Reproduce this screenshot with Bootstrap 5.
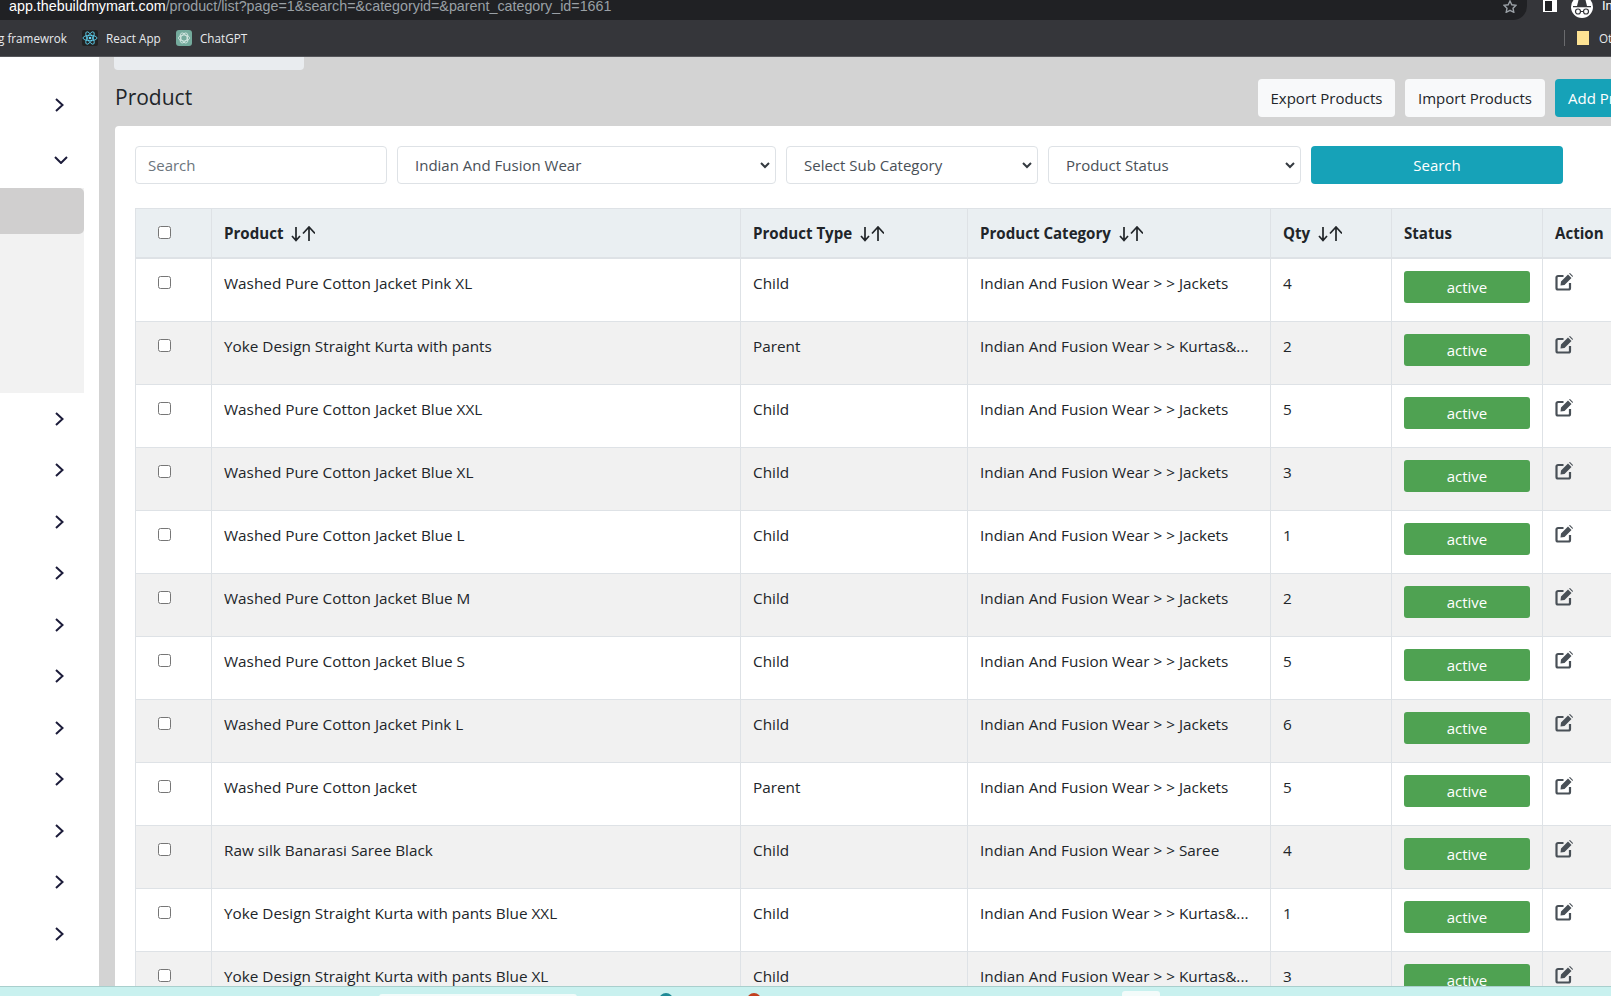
<!DOCTYPE html>
<html lang="en">
<head>
<meta charset="utf-8">
<title>Product</title>
<link href="https://cdn.jsdelivr.net/npm/bootstrap@5.3.0/dist/css/bootstrap.min.css" rel="stylesheet">
<style>
html,body{height:100%;overflow:hidden}
body{font-family:"Open Sans","Noto Sans",sans-serif;font-size:15px;color:#212529;background:#d3d3d3}
.shell{height:996px;width:1611px;overflow:hidden}
.omni-row{height:20px;background:#35363a;color:#fff;flex:none}
.omni{width:1527px;flex:none;height:20px;background:#202124;border-bottom-right-radius:14px;padding-left:9px;font:14.3px/13px "Liberation Sans",sans-serif;color:#9aa0a6;overflow:hidden}
.omni b{font-weight:400;color:#fff}
.omni-tools{height:20px}
.star-i{margin-right:10px;margin-top:0;flex:none}
.prof{width:22px;height:22px;border-radius:50%;background:#fff;margin:-4px 0 0 14px;flex:none}
.sq{width:14px;height:12px;background:#fff;padding:1px 0 0 2px;margin-left:16px;flex:none}
.sq i{display:block;width:7px;height:10px;background:#202124}
.prof-t{font:13px/12px "Liberation Sans",sans-serif;margin-left:9px;color:#fff;white-space:nowrap}
.bmarks{height:37px;flex:none;background:#35363a;border-bottom:1px solid #55565a;color:#e8eaed;font:11.7px/16px "Open Sans",sans-serif;white-space:nowrap;overflow:hidden}
.bm-1{margin-left:-2px;width:84px;flex:none}
.bm-i{width:16px;height:16px;margin-right:8px;flex:none}
.bm-2{width:70px;flex:none}
.bm-3{width:46px;flex:none}
.bm-div{width:1px;height:16px;background:#6a6b6e;margin-left:1318px;flex:none}
.bm-fold{width:12px;height:14px;background:#fde293;margin-left:12px;margin-right:10px;flex:none}
.app{height:929px;flex:none;overflow:hidden}
.sidenav{width:99px;flex:none;background:#fff;padding-top:22px;height:929px;overflow:hidden}
.nav-rw{height:51.5px;padding-left:55px}
.nav-rw.first{height:52px}
.nav-rw.open{height:52px;margin-top:3px;padding-left:54px}
.subm{height:205px;margin:2px 15px 0 0;background:#f2f2f2}
.subm-on{height:46px;background:#d0cfcf;border-radius:0 5px 5px 0}
.chev{stroke:#1c1c3a;stroke-width:2;fill:none}
.pagewrap{flex:1;min-width:0;padding-left:16px;overflow:hidden}
.crumbbox{height:13px;width:190px;margin-left:-1px;background:#e9ecef;border-radius:0 0 4px 4px}
.toprow{height:38px;margin-top:9px;margin-bottom:9px;width:1580px}
.tb-gap{gap:10px}
.ptitle{font-size:21px;font-weight:400;margin:0;line-height:38px;position:relative;top:-1px;color:#212529}
.tbtn{height:38px;padding:0 12px;font-size:15px;line-height:38px;border:0;border-radius:4px;white-space:nowrap}
.tbtn-l{background:#f8f9fa;color:#212529}
.tbtn-l.e{width:137px}
.tbtn-l.i{width:140px}
.tbtn-t{background:#16a2b8;color:#fff;width:140px;text-align:left;padding-left:13px}
.mainbox{width:1520px;background:#fff;border:0;border-radius:4px 0 0 0;padding:20px 20px 0;height:900px}
.filters{height:38px;margin-bottom:24px;gap:10px}
.f-search{width:252px;flex:none;font-size:15px;padding:0 12px;height:38px;border-radius:4px}
.f-search::placeholder{color:#6c757d}
.f-sel{height:38px;font-size:15px;color:#495057;padding:0 24px 0 17px;flex:none;border-radius:4px;background-position:right 5px center;background-size:10px 7px;background-image:url("data:image/svg+xml,%3csvg xmlns='http://www.w3.org/2000/svg' viewBox='0 0 10 7'%3e%3cpath fill='none' stroke='%23343a40' stroke-width='2' d='M1 1l4 4 4-4'/%3e%3c/svg%3e")}
.f-a{width:379px}.f-b{width:252px}.f-c{width:253px}
.f-btn{width:252px;height:38px;flex:none;background:#16a2b8;color:#fff;border:0;font-size:15px;border-radius:4px;padding:0}
.ptable{table-layout:fixed;width:1480px;margin:0;border-color:#dee2e6;color:#212529;font-size:15.3px}
.ptable th,.ptable td{padding:12px;height:63px;vertical-align:top;line-height:24px;white-space:nowrap;overflow:hidden}
.ptable thead th{height:49px;background:#eaeff2;font-weight:700;font-size:15.1px;padding:12px;border-bottom:2px solid #dee2e6;line-height:24px}
.ptable tbody tr:nth-child(even)>td{background:#f1f1f1}
.ptable input{width:13px;height:13px;margin:5px 0 0 10px;display:block;accent-color:#fff}
.c-chk{width:76px}.c-prod{width:529px}.c-type{width:227px}.c-cat{width:303px}.c-qty{width:121px}.c-st{width:151px}.c-act{width:73px}
.sort-i{width:24px;height:16px;margin-left:8px;vertical-align:-3px;stroke:#212529;stroke-width:1.7;fill:none}
.st-btn{display:block;width:126px;height:32px;margin-top:0;background:#4fa252;color:#fff;border:0;border-radius:3px;font-size:15px;line-height:32px;padding:0;text-align:center}
.ed-i{width:18px;height:18px;display:block;margin:2px 0 0 0}
.taskbar{height:10px;flex:none;background:#c9f1ef;border-top:1px solid #a9cfcd;position:relative;overflow:hidden}
.tb-w{position:absolute;background:#f3fbfa;border-radius:3px 3px 0 0}
.tb-w.a{left:379px;width:198px;top:7px;height:6px}
.tb-w.b{left:1122px;width:38px;top:4px;height:8px}
.tb-d{position:absolute;width:14px;height:14px;border-radius:50%;top:6px}
.tb-d.a{left:659px;background:#1f8a96}
.tb-d.b{left:747px;background:#c2401f}
</style>
</head>
<body>
<svg width="0" height="0" class="d-block position-absolute">
<symbol id="i-r" viewBox="0 0 9 14"><path d="M1 1l6.5 6L1 13"/></symbol>
<symbol id="i-d" viewBox="0 0 14 8"><path d="M1 1l6 6 6-6"/></symbol>
<symbol id="i-s" viewBox="0 0 24 16"><path d="M5 1v13M1 10l4 4.5 4-4.5M18 15V1.5M12 7.5L18 1l6 6.500"/></symbol>
<symbol id="i-e" viewBox="0 0 18 18"><path d="M8.500 3H3A1.500 1.500 0 0 0 1.500 4.500v10.500A1.500 1.500 0 0 0 3 16.500h10.500a1.500 1.500 0 0 0 1.500-1.500V10" fill="none" stroke="#495057" stroke-width="2.200"/><path d="M6 8.500l7-7 3.500 3.500-7 7-4 .500zM14 .5l1-.5 3 3-.5 1z" fill="#495057"/></symbol>
</svg>
<div class="shell d-flex flex-column">
  <div class="omni-row d-flex">
    <div class="omni d-flex justify-content-between"><span class="text-nowrap"><b>app.thebuildmymart.com</b>/product/list?page=1&amp;search=&amp;categoryid=&amp;parent_category_id=1661</span>
      <svg width="14" height="13" viewBox="0 0 14 13" class="star-i" fill="none" stroke="#9aa0a6" stroke-width="1.400"><path d="M7 1l1.800 3.800 4.200.500-3 2.900.800 4.100L7 10.300 3.200 12.300 4 8.200 1 5.300l4.200-.500z"/></svg></div>
    <div class="omni-tools d-flex align-items-start">
      <div class="sq"><i></i></div>
      <div class="prof d-flex align-items-center justify-content-center"><svg width="18" height="15" viewBox="0 0 18 15" fill="#35363a"><path d="M5.500 0h7l1.500 6h4v1.200H0V6h4z"/><circle cx="5" cy="11.500" r="2.500" fill="none" stroke="#35363a" stroke-width="1.200"/><circle cx="13" cy="11.500" r="2.500" fill="none" stroke="#35363a" stroke-width="1.200"/><path d="M7.500 11h3v1h-3z"/></svg></div>
      <div class="prof-t">In</div>
    </div>
  </div>
  <div class="bmarks d-flex align-items-center">
    <div class="bm-1">g framewrok</div>
    <svg class="bm-i" viewBox="0 0 16 16"><rect width="16" height="16" rx="2" fill="#222"/><g fill="none" stroke="#61dafb" stroke-width=".8"><ellipse cx="8" cy="8" rx="7" ry="2.700"/><ellipse cx="8" cy="8" rx="7" ry="2.700" transform="rotate(60 8 8)"/><ellipse cx="8" cy="8" rx="7" ry="2.700" transform="rotate(120 8 8)"/></g><circle cx="8" cy="8" r="1.300" fill="#61dafb"/></svg>
    <div class="bm-2">React App</div>
    <svg class="bm-i" viewBox="0 0 16 16"><rect width="16" height="16" rx="3" fill="#74aa9c"/><g fill="none" stroke="#e8f3f0" stroke-width=".7"><ellipse cx="8" cy="8" rx="5.500" ry="3"/><ellipse cx="8" cy="8" rx="5.500" ry="3" transform="rotate(60 8 8)"/><ellipse cx="8" cy="8" rx="5.500" ry="3" transform="rotate(120 8 8)"/></g></svg>
    <div class="bm-3">ChatGPT</div>
    <div class="bm-div"></div>
    <div class="bm-fold"></div>
    <div>Ot</div>
  </div>
  <div class="app d-flex">
    <aside class="sidenav">
      <div class="nav-rw first d-flex align-items-center"><svg class="chev" width="9" height="14"><use href="#i-r"/></svg></div>
      <div class="nav-rw open d-flex align-items-center"><svg class="chev" width="14" height="8"><use href="#i-d"/></svg></div>
      <div class="subm"><div class="subm-on"></div></div>
      <div class="nav-rw d-flex align-items-center"><svg class="chev" width="9" height="14"><use href="#i-r"/></svg></div>
      <div class="nav-rw d-flex align-items-center"><svg class="chev" width="9" height="14"><use href="#i-r"/></svg></div>
      <div class="nav-rw d-flex align-items-center"><svg class="chev" width="9" height="14"><use href="#i-r"/></svg></div>
      <div class="nav-rw d-flex align-items-center"><svg class="chev" width="9" height="14"><use href="#i-r"/></svg></div>
      <div class="nav-rw d-flex align-items-center"><svg class="chev" width="9" height="14"><use href="#i-r"/></svg></div>
      <div class="nav-rw d-flex align-items-center"><svg class="chev" width="9" height="14"><use href="#i-r"/></svg></div>
      <div class="nav-rw d-flex align-items-center"><svg class="chev" width="9" height="14"><use href="#i-r"/></svg></div>
      <div class="nav-rw d-flex align-items-center"><svg class="chev" width="9" height="14"><use href="#i-r"/></svg></div>
      <div class="nav-rw d-flex align-items-center"><svg class="chev" width="9" height="14"><use href="#i-r"/></svg></div>
      <div class="nav-rw d-flex align-items-center"><svg class="chev" width="9" height="14"><use href="#i-r"/></svg></div>
      <div class="nav-rw d-flex align-items-center"><svg class="chev" width="9" height="14"><use href="#i-r"/></svg></div>
    </aside>
    <main class="pagewrap">
      <div class="crumbbox"></div>
      <div class="toprow d-flex justify-content-between">
        <h1 class="ptitle">Product</h1>
        <div class="d-flex tb-gap">
          <button type="button" class="tbtn tbtn-l e">Export Products</button>
          <button type="button" class="tbtn tbtn-l i">Import Products</button>
          <button type="button" class="tbtn tbtn-t">Add Products</button>
        </div>
      </div>
      <div class="mainbox">
        <div class="filters d-flex">
          <input type="text" class="form-control f-search" placeholder="Search">
          <select class="form-select f-sel f-a"><option>Indian And Fusion Wear</option></select>
          <select class="form-select f-sel f-b"><option>Select Sub Category</option></select>
          <select class="form-select f-sel f-c"><option>Product Status</option></select>
          <button type="button" class="f-btn">Search</button>
        </div>
        <table class="table table-bordered ptable">
          <colgroup><col class="c-chk"><col class="c-prod"><col class="c-type"><col class="c-cat"><col class="c-qty"><col class="c-st"><col class="c-act"></colgroup>
          <thead><tr>
            <th><input type="checkbox"></th>
            <th>Product<svg class="sort-i"><use href="#i-s"/></svg></th>
            <th>Product Type<svg class="sort-i"><use href="#i-s"/></svg></th>
            <th>Product Category<svg class="sort-i"><use href="#i-s"/></svg></th>
            <th>Qty<svg class="sort-i"><use href="#i-s"/></svg></th>
            <th>Status</th>
            <th>Action</th>
          </tr></thead>
          <tbody>
            <tr><td><input type="checkbox"></td><td>Washed Pure Cotton Jacket Pink XL</td><td>Child</td><td>Indian And Fusion Wear &gt; &gt; Jackets</td><td>4</td><td><button type="button" class="st-btn">active</button></td><td><svg class="ed-i"><use href="#i-e"/></svg></td></tr>
            <tr><td><input type="checkbox"></td><td>Yoke Design Straight Kurta with pants</td><td>Parent</td><td>Indian And Fusion Wear &gt; &gt; Kurtas&amp;...</td><td>2</td><td><button type="button" class="st-btn">active</button></td><td><svg class="ed-i"><use href="#i-e"/></svg></td></tr>
            <tr><td><input type="checkbox"></td><td>Washed Pure Cotton Jacket Blue XXL</td><td>Child</td><td>Indian And Fusion Wear &gt; &gt; Jackets</td><td>5</td><td><button type="button" class="st-btn">active</button></td><td><svg class="ed-i"><use href="#i-e"/></svg></td></tr>
            <tr><td><input type="checkbox"></td><td>Washed Pure Cotton Jacket Blue XL</td><td>Child</td><td>Indian And Fusion Wear &gt; &gt; Jackets</td><td>3</td><td><button type="button" class="st-btn">active</button></td><td><svg class="ed-i"><use href="#i-e"/></svg></td></tr>
            <tr><td><input type="checkbox"></td><td>Washed Pure Cotton Jacket Blue L</td><td>Child</td><td>Indian And Fusion Wear &gt; &gt; Jackets</td><td>1</td><td><button type="button" class="st-btn">active</button></td><td><svg class="ed-i"><use href="#i-e"/></svg></td></tr>
            <tr><td><input type="checkbox"></td><td>Washed Pure Cotton Jacket Blue M</td><td>Child</td><td>Indian And Fusion Wear &gt; &gt; Jackets</td><td>2</td><td><button type="button" class="st-btn">active</button></td><td><svg class="ed-i"><use href="#i-e"/></svg></td></tr>
            <tr><td><input type="checkbox"></td><td>Washed Pure Cotton Jacket Blue S</td><td>Child</td><td>Indian And Fusion Wear &gt; &gt; Jackets</td><td>5</td><td><button type="button" class="st-btn">active</button></td><td><svg class="ed-i"><use href="#i-e"/></svg></td></tr>
            <tr><td><input type="checkbox"></td><td>Washed Pure Cotton Jacket Pink L</td><td>Child</td><td>Indian And Fusion Wear &gt; &gt; Jackets</td><td>6</td><td><button type="button" class="st-btn">active</button></td><td><svg class="ed-i"><use href="#i-e"/></svg></td></tr>
            <tr><td><input type="checkbox"></td><td>Washed Pure Cotton Jacket</td><td>Parent</td><td>Indian And Fusion Wear &gt; &gt; Jackets</td><td>5</td><td><button type="button" class="st-btn">active</button></td><td><svg class="ed-i"><use href="#i-e"/></svg></td></tr>
            <tr><td><input type="checkbox"></td><td>Raw silk Banarasi Saree Black</td><td>Child</td><td>Indian And Fusion Wear &gt; &gt; Saree</td><td>4</td><td><button type="button" class="st-btn">active</button></td><td><svg class="ed-i"><use href="#i-e"/></svg></td></tr>
            <tr><td><input type="checkbox"></td><td>Yoke Design Straight Kurta with pants Blue XXL</td><td>Child</td><td>Indian And Fusion Wear &gt; &gt; Kurtas&amp;...</td><td>1</td><td><button type="button" class="st-btn">active</button></td><td><svg class="ed-i"><use href="#i-e"/></svg></td></tr>
            <tr><td><input type="checkbox"></td><td>Yoke Design Straight Kurta with pants Blue XL</td><td>Child</td><td>Indian And Fusion Wear &gt; &gt; Kurtas&amp;...</td><td>3</td><td><button type="button" class="st-btn">active</button></td><td><svg class="ed-i"><use href="#i-e"/></svg></td></tr>
          </tbody>
        </table>
      </div>
    </main>
  </div>
  <div class="taskbar">
    <div class="tb-w a"></div><div class="tb-w b"></div><div class="tb-d a"></div><div class="tb-d b"></div>
  </div>
</div>
</body>
</html>
